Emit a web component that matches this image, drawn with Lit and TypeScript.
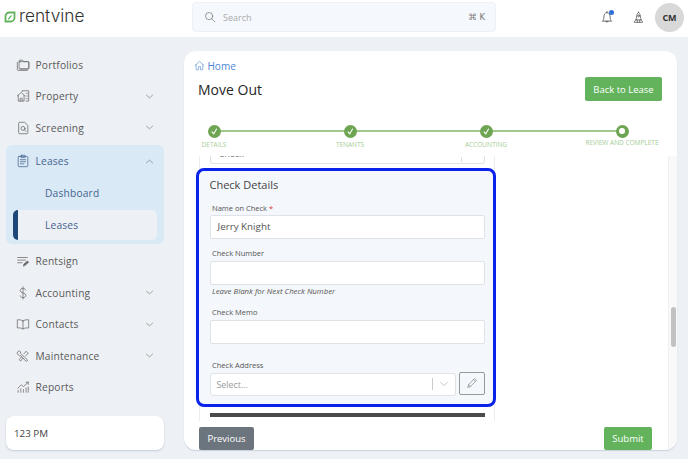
import { LitElement, html, css, svg } from "lit";
import { customElement } from "lit/decorators.js";

const ic = (body: unknown, size = 16, vb = "0 0 16 16") => html`<svg class="ic" width=${size} height=${size} viewBox=${vb} fill="none" stroke="currentColor" stroke-width="0.85" stroke-linecap="round" stroke-linejoin="round">${body}</svg>`;

const icons: Record<string, unknown> = {
  folder: svg`<path d="M3.5 4.5v-1a1 1 0 0 1 1-1h3l1.2 1.6h5a1 1 0 0 1 1 1v6.4a1 1 0 0 1-1 1H4.5"/><path d="M1.5 5v8.2a1 1 0 0 0 1 1h10.5"/><rect x="3.5" y="4.2" width="11.2" height="8.3" rx="1"/>`,
  property: svg`<path d="M1.5 8 6 4l4.2 4"/><path d="M2.6 7.4v6.4h6.6V7.4"/><path d="M4.8 13.8v-3.2h2.2v3.2"/><path d="M7 3V2h7.5v11.8h-3"/><path d="M11.5 5h.2M13 5h.1M11.5 8h.2M13 8h.1M11.5 11h.2M13 11h.1"/>`,
  screening: svg`<path d="M9.5 1.5H4a1 1 0 0 0-1 1v11a1 1 0 0 0 1 1h8.5a1 1 0 0 0 1-1V5.500z"/><circle cx="8" cy="8.500" r="2.300"/><path d="m9.700 10.200 1.800 1.800"/>`,
  leases: svg`<rect x="2.500" y="2.800" width="11" height="11.700" rx="1"/><rect x="5.500" y="1.500" width="5" height="2.600" rx=".6"/><path d="M5 6.500h6M5 8.800h6M5 11.200h4"/>`,
  rentsign: svg`<path d="M2 4h11M2 7h9M2 10h5"/><path d="m8.500 13.500.6-2 4-3.500 1.300 1.400-4 3.500z" fill="currentColor"/>`,
  dollar: svg`<path d="M11 4.500C10.500 3.200 9.300 2.700 8 2.700c-1.800 0-3.200.9-3.200 2.500C4.800 8.600 11.300 7.300 11.300 10.800c0 1.600-1.500 2.500-3.300 2.500-1.500 0-2.800-.7-3.300-2M8 1v14"/>`,
  book: svg`<path d="M8 4.500C6.500 3.300 4 3 1.500 3.200v9.300c2.500-.2 5 .1 6.500 1.200 1.500-1.100 4-1.400 6.500-1.200V3.200C12 3 9.500 3.300 8 4.500zM8 4.500v9.200"/>`,
  wrench: svg`<path d="M1.800 3.600 3.800 2l1.500 1.500-.3 1.400 1.500 1.400L12.800 12a1.200 1.200 0 0 1-1.700 1.700L5.400 7.500l-1.400.3L1.800 6z"/><path d="m9 5.500 2.500-3 2.500 2.500-3 2.500"/><path d="m4 11.500 2-2 1.500 1.500-2 2.500z"/>`,
  chart: svg`<path d="M2 9.500 6 5.500l2.500 2L14 2.500"/><path d="M11.500 2.500H14V5"/><path d="M2.500 14v-2M5.500 14v-4M8.500 14v-3M11.500 14v-5M14 14v-6"/>`,
  down: svg`<path d="m3.500 6 4.500 4 4.500-4"/>`,
  up: svg`<path d="m3.500 10 4.500-4 4.500 4"/>`,
  home: svg`<path d="M1.500 8 8 2l6.500 6"/><path d="M3.200 6.800v7.500h3.300v-4.500h3v4.500h3.300V6.800"/>`,
  pencil: svg`<path d="M2.500 13.500 3.500 10 11.500 2l2.500 2.500-8 8z"/><path d="m10 3.500 2.500 2.500M3.500 10 6 12.500"/>`,
  search: svg`<circle cx="6.800" cy="6.800" r="4.800"/><path d="m10.300 10.300 4.200 4.200"/>`,
  bell: svg`<path d="M3 12.500c1.200-1 1.400-2.200 1.400-4.500 0-2.600 1.400-5 3.600-5s3.600 2.400 3.600 5c0 2.300.2 3.500 1.400 4.500z"/><path d="M8 1.500V3M6.800 12.500c0 1.900 2.400 1.900 2.400 0"/>`,
  rocket: svg`<path d="M8 1.500c2 2 2.500 4 2.500 6.500l.9 3H4.600l.9-3C5.500 5.500 6 3.500 8 1.500z"/><circle cx="8" cy="6" r="1.100"/><path d="M5 11l-1.800 1.500V14h3.300M11 11l1.800 1.500V14H9.500"/><path d="M6.500 11v3h3v-3"/>`,
};

const row = (icon: string, label: string, chevron = false) => html`
  <div class="item">
    <span class="nav-ic">${ic(icons[icon])}</span>
    <span class="label">${label}</span>
    ${chevron ? html`<span class="chev">${ic(icons.down, 11)}</span>` : ""}
  </div>`;

@customElement("app-root")
export class AppRoot extends LitElement {
  static styles = css`
    :host { display: block; width: 688px; height: 459px; overflow: hidden; background: #edf0f4; font-family: "Open Sans", sans-serif; color: #555; }
    .ic { display: block; }
    header { height: 37px; background: #fff; display: flex; align-items: center; }
    .logo { width: 192px; height: 37px; display: flex; align-items: center; padding: 0 0 3px 4px; box-sizing: border-box; gap: 3px; }
    .logo-text { font-family: "Inter", sans-serif; font-weight: 300; font-size: 17.300px; color: #333; line-height: 1; margin-top: -2px; }
    .search { width: 304px; height: 30px; margin-top: -3px; box-sizing: border-box; background: #f5f8fc; border: 1px solid #edf0f5; border-radius: 4px; display: flex; align-items: center; padding: 0 10px 0 11px; color: #666; }
    .search-text { flex: 1; margin-left: 7px; font-size: 9px; color: #aaa; }
    .kbd { font-size: 8.500px; color: #777; font-family: "DejaVu Sans", sans-serif; }
    .top-icons { flex: 1; display: flex; align-items: center; justify-content: flex-end; padding-right: 4px; color: #444; margin-top: -3px; }
    .bell { position: relative; margin-right: 18px; }
    .dot { position: absolute; top: 0; right: 0; width: 5px; height: 5px; border-radius: 50%; background: #2f6fd6; }
    .rocket { margin-right: 10px; }
    .avatar { width: 29px; height: 29px; border-radius: 50%; background: #d8d8d8; color: #333; font-size: 9px; font-weight: 700; display: flex; align-items: center; justify-content: center; }

    .body { display: flex; height: 422px; }
    aside { width: 184px; flex: none; box-sizing: border-box; padding: 12px 20px 0 6px; }
    .item { height: 31.500px; display: flex; align-items: center; padding: 0 9px 0 10px; color: #5a5a5a; }
    .nav-ic { width: 14px; height: 14px; display: flex; align-items: center; justify-content: center; margin-right: 5.500px; color: #666; }
    .nav-ic .ic { width: 14px; height: 14px; }
    .label { flex: 1; font-size: 10.200px; letter-spacing: 0.2px; }
    .chev { color: #666; }
    .group { background: #d9e9f6; border-radius: 6px; height: 99px; margin: 1.500px 0; }
    .group .item { height: 32px; margin-bottom: 1px; color: #45648f; }
    .group .nav-ic { color: #45648f; }
    .sub { height: 30px; font-size: 10.200px; letter-spacing: 0.2px; color: #45648f; display: flex; align-items: center; padding-left: 39px; margin-bottom: 2px; }
    .sub.active { background: #edf0f4; margin: 0 7px; padding-left: 27px; height: 29.500px; border-radius: 5px; border-left: 5px solid #1e4679; box-sizing: border-box; }
    .clock { margin-top: 13px; height: 34px; background: #fff; border-radius: 8px; box-shadow: 0 1px 2px rgba(120, 135, 165, 0.35); font-size: 9.800px; display: flex; align-items: center; padding-left: 8px; color: #444; }

    main { width: 493px; height: 399px; margin-top: 14px; background: #fff; border-radius: 12px; box-shadow: 0 1px 1px rgba(120, 135, 165, 0.3); display: flex; overflow: hidden; }
    .col { width: 484px; flex: none; display: flex; flex-direction: column; }
    .rail { flex: 1; margin-top: 105px; background: #f9f9f9; border-left: 1px solid #f0f0f0; padding: 151px 1.500px 0; }
    .thumb { height: 40px; background: #c2c2c2; border-radius: 3px; }
    .crumb { height: 17px; margin: 6px 0 3px 10px; display: flex; align-items: center; gap: 2.500px; color: #4b84d6; font-size: 10px; }
    .title-row { height: 24px; display: flex; align-items: center; justify-content: space-between; padding: 0 6px 0 14px; }
    h1 { margin: 0; font-size: 14px; font-weight: 400; color: #262626; }
    .btn { border-radius: 2px; color: #fff; font-size: 9.500px; display: flex; align-items: center; justify-content: center; }
    .green { background: #62b35c; }
    .back { width: 77px; height: 24px; }

    .stepper { height: 31px; margin-top: 23.500px; margin-bottom: 0.500px; padding-left: 30px; display: flex; gap: 136px; box-sizing: border-box; }
    .step { width: 0; position: relative; display: flex; flex-direction: column; align-items: center; white-space: nowrap; }
    .step:not(:last-child)::after { content: ""; position: absolute; left: 0; top: 5.500px; width: 136px; height: 2px; background: #a0c98e; }
    .circle { width: 13px; height: 13px; flex: none; border-radius: 50%; background: #6ea552; color: #fff; display: flex; align-items: center; justify-content: center; position: relative; z-index: 1; }
    .circle.current::after { content: ""; width: 5.500px; height: 5.500px; background: #fff; border-radius: 50%; }
    .step-label { font-size: 6.500px; color: #a7cd98; margin-top: 2.500px; line-height: 9px; }
    .step-label.high { margin-top: 0; }

    .scroller { height: 265px; overflow: hidden; padding-left: 15px; }
    .wrap { width: 296px; height: 265px; box-sizing: border-box; border: solid #ececec; border-width: 0 1px; padding: 0 9.500px; }
    .clipped { height: 8px; box-sizing: border-box; border: 1px solid #e2e2e2; border-top: 0; border-radius: 0 0 3px 3px; overflow: hidden; display: flex; justify-content: space-between; padding: 0 22px 0 8px; font-size: 9px; line-height: 9px; color: #777; }
    .clipped span { margin-top: -7px; }
    .clipped i { width: 1px; height: 5px; margin-top: 1px; background: #ddd; }
    .box { margin: 4px -11.500px 0 -13.500px; height: 239px; box-sizing: border-box; border: 3px solid #0a22ea; border-radius: 8px; background: #f4f7fb; padding: 6px 8px 0 10.500px; }
    h2 { margin: 0 0 9px; font-size: 11px; line-height: 16px; font-weight: 400; color: #444; }
    .lbl { display: block; height: 12px; line-height: 12px; font-size: 7.500px; color: #555; padding-left: 2.500px; margin-bottom: 1px; }
    .lbl b { color: #d33; font-weight: 400; }
    .input { height: 23.500px; box-sizing: border-box; background: #fff; border: 1px solid #dfe3e8; border-radius: 2px; display: flex; align-items: center; padding-left: 7px; font-size: 9.800px; color: #555; }
    .number { margin-top: 8px; margin-bottom: 2.500px; }
    .help { margin: 0 0 0 2.500px; height: 12px; line-height: 12px; font-size: 7.800px; font-style: italic; color: #555; }
    .memo { margin-top: 9px; margin-bottom: 2.500px; }
    .addr { margin-top: 15px; margin-bottom: 2px; }
    .select-row { display: flex; gap: 3px; }
    .select { width: 247px; height: 23.500px; box-sizing: border-box; background: #fff; border: 1px solid #dfe3e8; border-radius: 3px; display: flex; align-items: center; padding-left: 6px; font-size: 8.800px; color: #9a9a9a; }
    .select span { flex: 1; padding-top: 1px; }
    .select i { width: 1px; height: 12px; background: #ccc; }
    .select .caret { width: 22px; flex: none; display: flex; justify-content: center; color: #aaa; }
    .pencil { width: 26px; height: 23.500px; box-sizing: border-box; border: 1px solid #999; border-radius: 2px; display: flex; align-items: center; justify-content: center; color: #777; margin-top: -1px; }
    .bar { height: 3.500px; margin-top: 6px; background: #4a4a4a; }

    .footer { flex: 1; display: flex; justify-content: space-between; padding: 6px 16px 0 15px; }
    .footer .btn { height: 23px; }
    .prev { width: 55px; background: #6c757d; }
    .submit { width: 48px; }
  `;

  render() {
    const check = ic(svg`<path d="m5 8.500 2 2.500 3.500-6" stroke-width="1.300"/>`, 13);
    return html`
      <header>
        <div class="logo">
          <svg width="12" height="12" viewBox="0 0 16 16" fill="none" stroke="#62b35c" stroke-width="2.400"><path d="M14 2H7a5 5 0 0 0-5 5v7h7a5 5 0 0 0 5-5z"/><path d="M5.500 11 10 6" stroke-width="1.500"/></svg>
          <span class="logo-text">rentvine</span>
        </div>
        <div class="search">
          ${ic(icons.search, 12)}
          <span class="search-text">Search</span>
          <span class="kbd">⌘ K</span>
        </div>
        <div class="top-icons">
          <span class="bell">${ic(icons.bell, 14)}<span class="dot"></span></span>
          <span class="rocket">${ic(icons.rocket, 13)}</span>
          <span class="avatar">CM</span>
        </div>
      </header>
      <div class="body">
        <aside>
          ${row("folder", "Portfolios")}
          ${row("property", "Property", true)}
          ${row("screening", "Screening", true)}
          <div class="group">
            <div class="item">
              <span class="nav-ic">${ic(icons.leases)}</span>
              <span class="label">Leases</span>
              <span class="chev">${ic(icons.up, 11)}</span>
            </div>
            <div class="sub">Dashboard</div>
            <div class="sub active">Leases</div>
          </div>
          ${row("rentsign", "Rentsign")}
          ${row("dollar", "Accounting", true)}
          ${row("book", "Contacts", true)}
          ${row("wrench", "Maintenance", true)}
          ${row("chart", "Reports")}
          <div class="clock">123 PM</div>
        </aside>
        <main>
          <div class="col">
            <div class="crumb">${ic(icons.home, 11)}<span>Home</span></div>
            <div class="title-row">
              <h1>Move Out</h1>
              <div class="btn green back">Back to Lease</div>
            </div>
            <div class="stepper">
              <div class="step"><span class="circle">${check}</span><span class="step-label">DETAILS</span></div>
              <div class="step"><span class="circle">${check}</span><span class="step-label">TENANTS</span></div>
              <div class="step"><span class="circle">${check}</span><span class="step-label">ACCOUNTING</span></div>
              <div class="step"><span class="circle current"></span><span class="step-label high">REVIEW AND COMPLETE</span></div>
            </div>
            <div class="scroller">
              <div class="wrap">
                <div class="clipped"><span>Check</span><i></i></div>
                <section class="box">
                  <h2>Check Details</h2>
                  <label class="lbl">Name on Check <b>*</b></label>
                  <div class="input">Jerry Knight</div>
                  <label class="lbl number">Check Number</label>
                  <div class="input"></div>
                  <div class="help">Leave Blank for Next Check Number</div>
                  <label class="lbl memo">Check Memo</label>
                  <div class="input"></div>
                  <label class="lbl addr">Check Address</label>
                  <div class="select-row">
                    <div class="select"><span>Select...</span><i></i><b class="caret">${ic(icons.down, 12)}</b></div>
                    <div class="pencil">${ic(icons.pencil, 12)}</div>
                  </div>
                </section>
                <div class="bar"></div>
              </div>
            </div>
            <div class="footer">
              <div class="btn prev">Previous</div>
              <div class="btn green submit">Submit</div>
            </div>
          </div>
          <div class="rail"><div class="thumb"></div></div>
        </main>
      </div>
    `;
  }
}
